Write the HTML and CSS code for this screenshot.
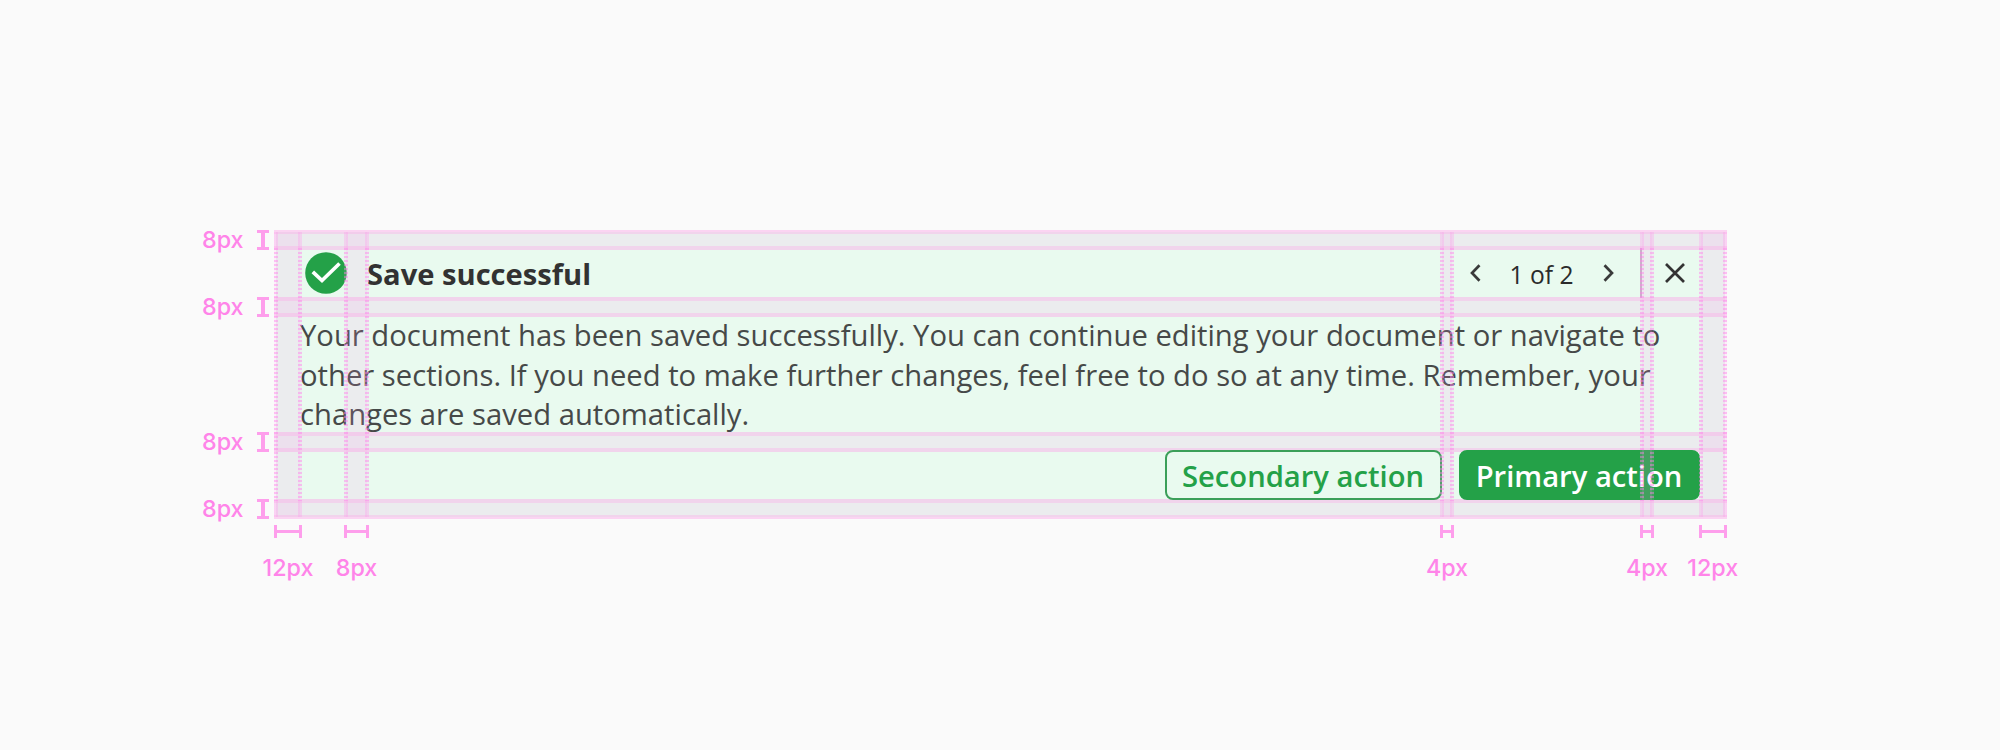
FILE: index.html
```html
<!DOCTYPE html>
<html lang="en">
<head>
<meta charset="utf-8">
<title>Notification spacing</title>
<link rel="stylesheet" href="styles.css">
</head>
<body>
<main class="stage">
  <section class="notification">
    <header class="header">
      <svg class="status" viewBox="0 0 42 42"><circle cx="21" cy="21" r="20.8" fill="#24a148"/><path d="M7.800 19.800 17 28.500 34.500 11.500" fill="none" stroke="#fff" stroke-width="3.700"/></svg>
      <h1 class="title">Save successful</h1>
      <nav class="pager">
        <svg class="chevron" viewBox="0 0 12 18"><path d="M10.500 1.200 3 9 10.500 16.800"/></svg>
        <span class="count">1 of 2</span>
        <svg class="chevron" viewBox="0 0 12 18"><path d="M2.500 1.200 10 9 2.500 16.800"/></svg>
      </nav>
      <svg class="close" viewBox="0 0 20 20"><path d="M1 1 19 19M19 1 1 19"/></svg>
    </header>
    <p class="message">Your document has been saved successfully. You can continue editing your document or navigate to<br>other sections. If you need to make further changes, feel free to do so at any time. Remember, your<br>changes are saved automatically.</p>
    <div class="actions">
      <button class="button secondary"><span>Secondary action</span></button>
      <button class="button primary"><span>Primary action</span></button>
    </div>
  </section>
  <div class="row r1"></div><div class="row r2"></div><div class="row r3"></div><div class="row r4"></div>
  <div class="col c1"></div><div class="col c2"></div><div class="col c3"></div><div class="col c4"></div><div class="col c5"></div>
  <div class="vlabel r1"><span>8px</span><i></i></div>
  <div class="vlabel r2"><span>8px</span><i></i></div>
  <div class="vlabel r3"><span>8px</span><i></i></div>
  <div class="vlabel r4"><span>8px</span><i></i></div>
  <div class="hlabel c1"><i></i><span>12px</span></div>
  <div class="hlabel c2"><i></i><span>8px</span></div>
  <div class="hlabel c3"><i></i><span>4px</span></div>
  <div class="hlabel c4"><i></i><span>4px</span></div>
  <div class="hlabel c5"><i></i><span>12px</span></div>
</main>
</body>
</html>
```
FILE: styles.css
```css
* { box-sizing: border-box; }
body { margin: 0; background: #fafafa; font-family: "Open Sans", "Noto Sans", sans-serif; }
.stage { position: relative; width: 2000px; height: 750px; padding: 232px 275px 0 276px; overflow: hidden; }
.notification { height: 285px; padding: 16px 25px 16px 24px; background: #e9faef; }
.header { display: flex; align-items: center; height: 50.500px; }
.status { width: 42px; height: 42px; margin-left: 4.600px; }
.title { flex: 1; margin: 0 0 0 20.400px; font-size: 29.150px; line-height: 48px; padding-top: 2px; font-weight: 700; color: #323232; }
.pager { display: flex; align-items: center; justify-content: space-between; width: 173px; height: 50px; padding-right: 26px; border-right: 2px solid #c3b3c4; }
.chevron { width: 12px; height: 18px; fill: none; stroke: #3a3a3a; stroke-width: 2.700; }
.count { padding-top: 2px; font-size: 24.600px; color: #2b2b2b; white-space: nowrap; }
.close { width: 20px; height: 20px; margin: 0 15px 0 23px; fill: none; stroke: #333; stroke-width: 2.700; }
.message { height: 119px; margin: 16.500px 0 16px; padding-top: 1px; font-size: 29.220px; line-height: 39.600px; color: #464948; white-space: nowrap; }
.actions { position: relative; z-index: 2; display: flex; justify-content: flex-end; gap: 17px; }
.button { display: flex; align-items: center; justify-content: center; height: 50px; padding: 2px 1px 0 0; border: 2px solid #24a148; border-radius: 8px; font: 600 29.200px/44px "Open Sans", "Noto Sans", sans-serif; white-space: nowrap; }
.secondary { width: 277px; border-color: #3b9f59; background: #e9faef; color: #24a148; }
.primary { width: 241px; background: #24a148; color: #fff; }

.row { position: absolute; left: 274px; width: 1452.500px; height: 20px; background: rgba(250, 156, 236, .14); border-top: 4px solid rgba(252, 160, 232, .42); border-bottom: 4px solid rgba(252, 160, 232, .42); background-clip: padding-box; }
.r1 { top: 230px; }
.r2 { top: 297px; }
.r3 { top: 432px; }
.r4 { top: 498.600px; }
.col { position: absolute; z-index: 3; top: 232px; height: 285px; background: rgba(250, 156, 236, .14); }
.col::before, .col::after { content: ""; position: absolute; top: 0; bottom: 0; width: 4px; background: linear-gradient(rgba(255, 150, 236, .3) 0 16px, transparent 16px 269px, rgba(255, 150, 236, .3) 269px), repeating-linear-gradient(rgba(255, 130, 235, .5) 0 2px, rgba(255, 160, 235, .12) 2px 4px) 0 16px / 100% 253px no-repeat; }
.col::before { left: -2px; }
.col::after { right: -2px; }
.c1 { left: 276px; width: 24px; }
.c2 { left: 346px; width: 21px; }
.c3 { left: 1442px; width: 10px; }
.c4 { left: 1642px; width: 10px; }
.c5 { left: 1700.500px; width: 24.500px; }

.vlabel, .hlabel { position: absolute; display: flex; align-items: center; font: 500 23.300px/28px Inter, sans-serif; color: #ff84e9; }
.vlabel { left: 202px; width: 67px; height: 20px; justify-content: space-between; }
.vlabel i { width: 12px; height: 20px; border: solid #fe9eec; border-width: 3px 0; background: linear-gradient(#fe9eec, #fe9eec) center / 4px 100% no-repeat; }
.hlabel { top: 525px; flex-direction: column; gap: 16px; }
.hlabel i { align-self: stretch; flex: none; height: 13px; margin: 0 -2px; border: solid #fe9eec; border-width: 0 3px; background: linear-gradient(#fe9eec, #fe9eec) center / 100% 3px no-repeat; }
```
